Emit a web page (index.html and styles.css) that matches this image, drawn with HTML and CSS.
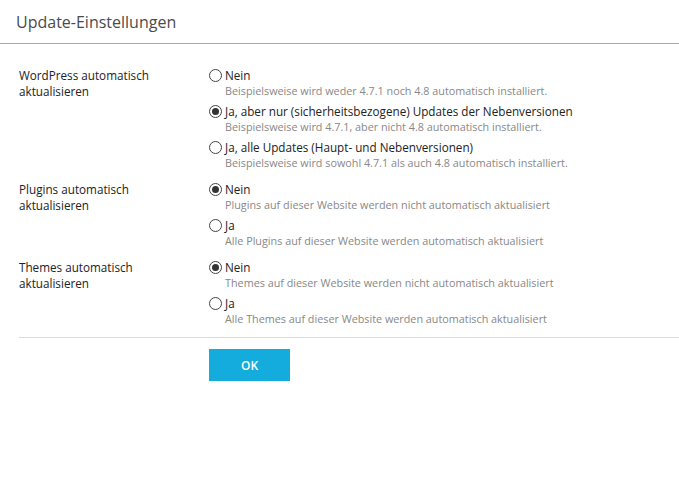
FILE: index.html
```html
<!DOCTYPE HTML>
<html>
	<head>
		<meta charset="utf-8"/>
		<title>Update-Einstellungen</title>
		<link rel="stylesheet" href="styles.css">
	</head>
	<body>
		<h1 class="title">Update-Einstellungen</h1>

		<form class="settings">
			<div class="row">
				<div class="row-label">WordPress automatisch aktualisieren</div>
				<div class="options">
					<label class="option">
						<span class="radio"></span>
						<span class="option-text">
							<span class="option-name">Nein</span>
							<span class="hint">Beispielsweise wird weder 4.7.1 noch 4.8 automatisch installiert.</span>
						</span>
					</label>
					<label class="option">
						<span class="radio checked"></span>
						<span class="option-text">
							<span class="option-name">Ja, aber nur (sicherheitsbezogene) Updates der Nebenversionen</span>
							<span class="hint">Beispielsweise wird 4.7.1, aber nicht 4.8 automatisch installiert.</span>
						</span>
					</label>
					<label class="option">
						<span class="radio"></span>
						<span class="option-text">
							<span class="option-name">Ja, alle Updates (Haupt- und Nebenversionen)</span>
							<span class="hint">Beispielsweise wird sowohl 4.7.1 als auch 4.8 automatisch installiert.</span>
						</span>
					</label>
				</div>
			</div>

			<div class="row">
				<div class="row-label">Plugins automatisch aktualisieren</div>
				<div class="options">
					<label class="option">
						<span class="radio checked"></span>
						<span class="option-text">
							<span class="option-name">Nein</span>
							<span class="hint">Plugins auf dieser Website werden nicht automatisch aktualisiert</span>
						</span>
					</label>
					<label class="option">
						<span class="radio"></span>
						<span class="option-text">
							<span class="option-name">Ja</span>
							<span class="hint">Alle Plugins auf dieser Website werden automatisch aktualisiert</span>
						</span>
					</label>
				</div>
			</div>

			<div class="row">
				<div class="row-label">Themes automatisch aktualisieren</div>
				<div class="options">
					<label class="option">
						<span class="radio checked"></span>
						<span class="option-text">
							<span class="option-name">Nein</span>
							<span class="hint">Themes auf dieser Website werden nicht automatisch aktualisiert</span>
						</span>
					</label>
					<label class="option">
						<span class="radio"></span>
						<span class="option-text">
							<span class="option-name">Ja</span>
							<span class="hint">Alle Themes auf dieser Website werden automatisch aktualisiert</span>
						</span>
					</label>
				</div>
			</div>

			<div class="buttons">
				<button type="button" class="btn-ok">OK</button>
			</div>
		</form>
	</body>
</html>
```

FILE: styles.css
```css
body {
	margin: 0;
	font-family: "Open Sans", "Liberation Sans", sans-serif;
	color: #222;
	background: #fff;
}
.title {
	margin: 0;
	padding: 10px 16px 9px 16px;
	font-size: 16px;
	font-weight: normal;
	line-height: 24px;
	color: #4b4b4b;
	border-bottom: 1px solid #aaa;
}
.settings {
	padding: 23px 0 0 19px;
}
.row {
	display: flex;
	margin-bottom: 10px;
}
.row-label {
	width: 190px;
	padding-right: 40px;
	box-sizing: border-box;
	font-size: 11.7px;
	line-height: 16px;
}
.options {
	display: flex;
	flex-direction: column;
	gap: 4px;
}
.option {
	display: flex;
	align-items: flex-start;
}
.radio {
	width: 11px;
	height: 11px;
	border: 1px solid #444;
	border-radius: 50%;
	margin: 2px 3px 0 0;
	flex: none;
	display: flex;
	align-items: center;
	justify-content: center;
}
.radio.checked::after {
	content: "";
	width: 7px;
	height: 7px;
	border-radius: 50%;
	background: #333;
}
.option-text {
	display: flex;
	flex-direction: column;
}
.option-name {
	font-size: 11.7px;
	line-height: 16px;
}
.hint {
	font-size: 10.8px;
	line-height: 16px;
	color: #888;
}
.buttons {
	border-top: 1px solid #ddd;
	margin-top: 8px;
	padding: 11px 0 0 190px;
}
.btn-ok {
	width: 81px;
	height: 32px;
	border: 0;
	background: #14abdd;
	color: #fff;
	font-family: "Open Sans", "Liberation Sans", sans-serif;
	font-size: 12px;
	font-weight: 600;
}
```
